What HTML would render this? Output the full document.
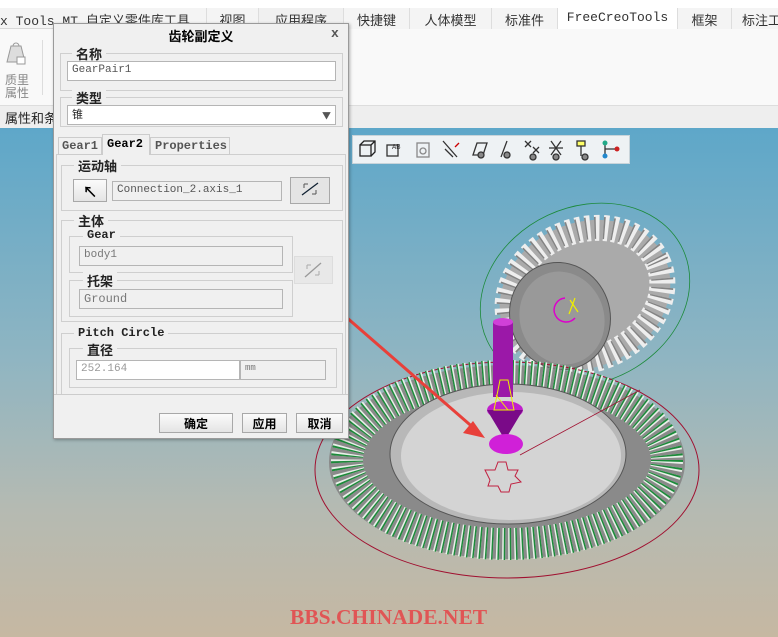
<!DOCTYPE html>
<html><head><meta charset="utf-8"><style>
*{box-sizing:border-box}
body{margin:0;width:778px;height:637px;overflow:hidden;position:relative;font-family:"Liberation Mono","Noto Sans CJK SC",monospace;font-size:12px;background:#fff}
.abs{position:absolute}
.tab{position:absolute;top:8px;height:21px;font-size:13px;color:#333;padding:2px 0 0 0;text-align:center;border-left:1px solid #ddd;background:#f0f0f0}
.vp{position:absolute;left:0;top:128px;width:778px;height:509px;background:linear-gradient(#5ea7c9 0%,#8fb5c2 45%,#b5bab2 75%,#c6b8a2 100%)}
.dlg{position:absolute;left:53px;top:23px;width:296px;height:416px;background:#f0f0f0;border:1px solid #9a9a9a;box-shadow:1px 1px 3px rgba(0,0,0,.3)}
.grp{position:absolute;border:1px solid #cfcfcf}
.lbl{position:absolute;background:#f0f0f0;padding:0 4px;font-weight:bold;font-size:13px;color:#222;font-family:"Liberation Mono","Noto Sans CJK SC",monospace}
.fld{position:absolute;height:20px;border:1px solid #b5b5b5;background:#fff;font-size:11px;color:#555;padding:2px 4px;font-family:"Liberation Mono",monospace}
.dis{background:#f0f0f0;color:#777}
.btn{position:absolute;height:20px;border:1px solid #a8a8a8;background:linear-gradient(#fbfbfb,#e4e4e4);font-size:12px;font-weight:bold;text-align:center;padding-top:1px;font-family:"Noto Sans CJK SC",sans-serif}
</style></head><body>
<div class="abs" style="left:0;top:0;width:778px;height:8px;background:#fff"></div>
<div class="abs" style="left:0;top:8px;width:778px;height:21px;background:#f4f4f4;border-bottom:1px solid #d8d8d8"></div>
<div class="abs" style="left:0;top:10px;font-size:13px;color:#333;white-space:nowrap">x Tools MT 自定义零件库工具</div>
<div class="tab" style="left:206px;width:52px;background:#f4f4f4">视图</div>
<div class="tab" style="left:258px;width:85px">应用程序</div>
<div class="tab" style="left:343px;width:66px;background:#f4f4f4">快捷键</div>
<div class="tab" style="left:409px;width:82px;background:#f4f4f4">人体模型</div>
<div class="tab" style="left:491px;width:66px;background:#f4f4f4">标准件</div>
<div class="tab" style="left:557px;width:120px;background:#fff;font-family:'Liberation Mono',monospace">FreeCreoTools</div>
<div class="tab" style="left:677px;width:54px;background:#f4f4f4">框架</div>
<div class="tab" style="left:731px;width:60px;background:#f4f4f4">标注工</div>
<div class="abs" style="left:0;top:29px;width:778px;height:76px;background:#f9f9f9"></div>
<svg class="abs" style="left:3px;top:38px" width="30" height="30"><path d="M8 8h10l4 16H4z" fill="#ddd" stroke="#999"/><path d="M10 8a3 3 0 016 0" fill="none" stroke="#999"/><rect x="14" y="19" width="8" height="7" fill="#fff" stroke="#999"/></svg>
<div class="abs" style="left:5px;top:73px;font-size:12px;line-height:13px;color:#888;font-family:'Noto Sans CJK SC',sans-serif">质里<br>属性</div>
<div class="abs" style="left:42px;top:40px;width:1px;height:55px;background:#ddd"></div>
<div class="abs" style="left:0;top:105px;width:778px;height:23px;background:#eee;border-top:1px solid #ddd"></div>
<div class="abs" style="left:5px;top:108px;font-size:13px;color:#222;font-family:'Noto Sans CJK SC',sans-serif">属性和条</div>
<div class="vp"></div>
<div class="abs" style="left:352px;top:135px;width:278px;height:29px;background:#eef2f4;border:1px solid #c8d4da"></div>
<svg class="abs" style="left:355px;top:137px" width="275" height="26" fill="none" stroke-width="1.3">
<g stroke="#222"><rect x="5" y="8" width="11" height="11"/><path d="M5 8l4-4h11v11l-4 4M16 8l4-4"/></g>
<g stroke="#333"><rect x="32" y="8" width="11" height="11"/><text x="37" y="12" font-size="7" fill="#333" stroke="none">AB</text></g>
<g stroke="#888"><rect x="62" y="6" width="12" height="14"/><circle cx="68" cy="14" r="3"/></g>
<g stroke="#333"><path d="M88 4l14 16M90 12l8 8"/><path d="M104 6l-4 4" stroke="#c00"/></g>
<g stroke="#333"><path d="M118 18l4-12h10l-4 12z"/><circle cx="126" cy="18" r="3" fill="#888"/></g>
<g stroke="#333"><path d="M146 20l6-16"/><circle cx="152" cy="18" r="3" fill="#888"/></g>
<g stroke="#333"><path d="M170 4l6 6M176 4l-6 6M178 10l6 6M184 10l-6 6"/><circle cx="178" cy="20" r="3" fill="#888"/></g>
<g stroke="#333"><path d="M196 4l10 14M206 4l-10 14M194 11h14"/><circle cx="201" cy="20" r="3" fill="#888"/></g>
<g stroke="#333"><rect x="222" y="4" width="8" height="5" fill="#ff6"/><path d="M226 9v10"/><circle cx="230" cy="20" r="3" fill="#888"/></g>
<g><path d="M250 6v12M250 12h12" stroke="#333"/><circle cx="250" cy="6" r="2.5" fill="#2a8"/><circle cx="250" cy="19" r="2.5" fill="#28c"/><circle cx="262" cy="12" r="2.5" fill="#c22"/></g>
</svg>
<svg class="abs" style="left:0;top:0" width="778" height="637">
<g transform="rotate(-25 585 295)">
<ellipse cx="585" cy="295" rx="88" ry="72" fill="#aaa"/>
<ellipse cx="585" cy="295" rx="80" ry="64" fill="none" stroke="#eee" stroke-width="26" stroke-dasharray="5 4"/>
<ellipse cx="585" cy="295" rx="80" ry="64" fill="none" stroke="#555" stroke-width="22" stroke-dasharray="1.5 7.5" opacity=".7"/>
<ellipse cx="585" cy="295" rx="108" ry="88" fill="none" stroke="#1c8a3a" stroke-width=".8"/>
</g>
<ellipse cx="560" cy="316" rx="50" ry="54" transform="rotate(-20 560 316)" fill="#8a8a8a" stroke="#555"/>
<ellipse cx="562" cy="318" rx="42" ry="47" transform="rotate(-20 562 318)" fill="#999"/>
<path d="M565 298a12 12 0 1 0 10 20" fill="none" stroke="#d0c" stroke-width="1.5"/>
<path d="M570 300l8 12M575 298l-6 16" stroke="#ee0" stroke-width="1.2"/>
<ellipse cx="507" cy="470" rx="192" ry="108" fill="none" stroke="#a01030" stroke-width="1"/>
<ellipse cx="507" cy="462" rx="178" ry="97" fill="#8a8a8a"/>
<ellipse cx="507" cy="460" rx="160" ry="84" fill="none" stroke="#e8f0e8" stroke-width="32" stroke-dasharray="3 3"/>
<ellipse cx="507" cy="460" rx="160" ry="84" fill="none" stroke="#1c8a3a" stroke-width="32" stroke-dasharray="1.5 4.5"/>
<ellipse cx="508" cy="454" rx="118" ry="70" fill="#b8b8b8" stroke="#555"/>
<ellipse cx="511" cy="456" rx="110" ry="64" fill="#d4d4d4"/>
<path d="M520 455L640 390" stroke="#a01030" stroke-width=".8"/>
<path d="M485 470h10l3-8 8 0 2 8 10 0-3 6 6 6-10 2-2 8h-8l-3-6-10 0 2-6z" fill="none" stroke="#c02040"/>
<rect x="493" y="322" width="20" height="75" fill="#9b18a8"/>
<ellipse cx="503" cy="322" rx="10" ry="4" fill="#d040d8"/>
<ellipse cx="505" cy="410" rx="18" ry="9" fill="#c020cc"/>
<path d="M487 410h36l-18 30z" fill="#7a0a88"/>
<ellipse cx="506" cy="444" rx="17" ry="10" fill="#d020d8"/>
<path d="M500 380l-6 30h20l-6-30zM496 395l12 15" fill="none" stroke="#ee0"/>
<path d="M200 190L476 430" stroke="#e8403a" stroke-width="3"/>
<path d="M485 438l-22-5 10-12z" fill="#e8403a"/>
</svg>
<div class="abs" style="left:290px;top:605px;font-family:'Liberation Serif',serif;font-weight:bold;font-size:21.5px;color:#e05555">BBS.CHINADE.NET</div>
<div class="dlg">
<div class="abs" style="left:0;top:0;width:294px;height:22px;text-align:center;font-size:13px;font-weight:bold;font-family:'Noto Sans CJK SC',sans-serif;padding-top:2px">齿轮副定义</div>
<div class="abs" style="left:277px;top:2px;font-weight:bold;font-size:13px;color:#555">x</div>
<div class="grp" style="left:6px;top:29px;width:283px;height:38px"></div><div class="lbl" style="left:18px;top:20px">名称</div>
<div class="fld" style="left:13px;top:37px;width:269px">GearPair1</div>
<div class="grp" style="left:6px;top:73px;width:283px;height:30px"></div><div class="lbl" style="left:18px;top:64px">类型</div>
<div class="fld" style="left:13px;top:81px;width:269px;font-family:'Noto Sans CJK SC',sans-serif;color:#222;padding-top:0">锥<span style="position:absolute;right:4px;top:3px;font-size:9px;color:#555">▼</span></div>
<div class="abs" style="left:2px;top:130px;width:290px;height:240px;border:1px solid #cfcfcf;border-bottom:none"></div>
<div class="abs" style="left:4px;top:113px;width:44px;height:18px;font-size:12px;color:#555;font-weight:bold;border:1px solid #ccc;padding:1px 3px">Gear1</div>
<div class="abs" style="left:48px;top:110px;width:48px;height:21px;font-size:12px;font-weight:bold;border:1px solid #ccc;border-bottom:none;padding:2px 4px;background:#f0f0f0">Gear2</div>
<div class="abs" style="left:96px;top:113px;width:80px;height:18px;font-size:12px;color:#555;font-weight:bold;border:1px solid #ccc;padding:1px 4px">Properties</div>
<div class="grp" style="left:7px;top:141px;width:282px;height:46px"></div><div class="lbl" style="left:20px;top:132px">运动轴</div>
<div class="btn" style="left:19px;top:155px;width:34px;height:23px;font-size:15px">&#x2196;</div>
<div class="fld dis" style="left:58px;top:157px;width:170px;color:#555">Connection_2.axis_1</div>
<div class="btn" style="left:236px;top:153px;width:40px;height:27px;background:#e4e4e4"><svg width="24" height="20"><path d="M4 16L20 4" stroke="#123" stroke-width="1.3"/><path d="M6 5h4M6 5v4M18 15h-4M18 15v-4" stroke="#555"/></svg></div>
<div class="grp" style="left:7px;top:196px;width:282px;height:102px"></div><div class="lbl" style="left:20px;top:187px">主体</div>
<div class="grp" style="left:15px;top:212px;width:224px;height:37px"></div><div class="lbl" style="left:29px;top:204px;font-family:'Liberation Mono',monospace;font-size:12px">Gear</div>
<div class="fld dis" style="left:25px;top:222px;width:204px">body1</div>
<div class="grp" style="left:15px;top:256px;width:224px;height:37px"></div><div class="lbl" style="left:29px;top:247px">托架</div>
<div class="fld dis" style="left:25px;top:265px;width:204px;font-size:12px">Ground</div>
<div class="abs" style="left:240px;top:232px;width:39px;height:28px;border:1px solid #ddd;background:#e8e8e8"><svg width="36" height="26"><path d="M10 20L26 6" stroke="#999" stroke-width="1.3"/><path d="M12 8h4M12 8v4M24 18h-4M24 18v-4" stroke="#aaa"/></svg></div>
<div class="grp" style="left:7px;top:309px;width:282px;height:62px;border-bottom:none"></div><div class="lbl" style="left:20px;top:302px;font-family:'Liberation Mono',monospace;font-size:12px">Pitch Circle</div>
<div class="grp" style="left:15px;top:324px;width:268px;height:40px"></div><div class="lbl" style="left:29px;top:316px">直径</div>
<div class="fld" style="left:22px;top:336px;width:164px;color:#999">252.164</div>
<div class="fld dis" style="left:186px;top:336px;width:86px;font-size:9px">mm</div>
<div class="abs" style="left:0;top:370px;width:294px;height:1px;background:#ccc"></div>
<div class="btn" style="left:105px;top:389px;width:74px">确定</div>
<div class="btn" style="left:188px;top:389px;width:45px">应用</div>
<div class="btn" style="left:242px;top:389px;width:47px">取消</div>
</div>
</body></html>
